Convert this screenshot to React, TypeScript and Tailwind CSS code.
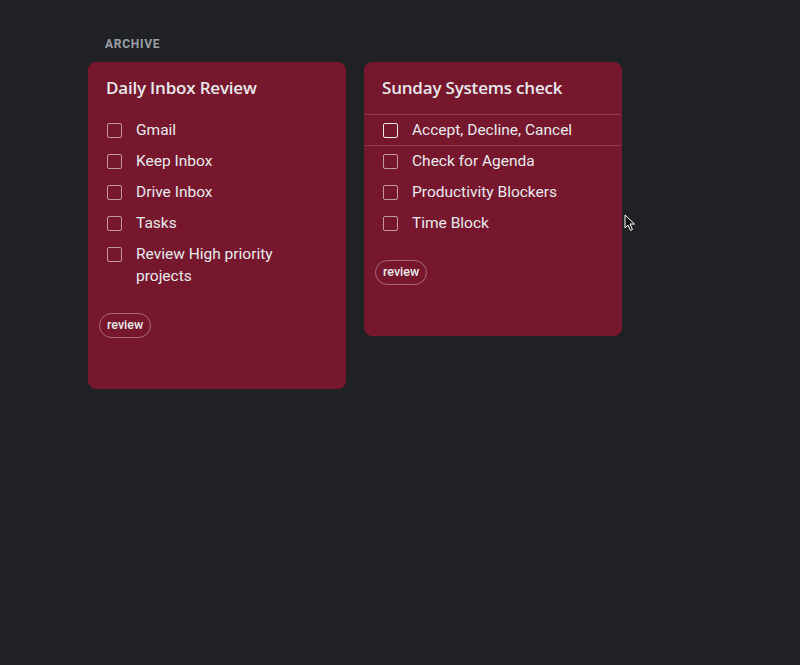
import { useState } from 'react'

type Note = { title: string; items: string[]; label: string; hovered?: number }

const NOTES: Note[] = [
  {
    title: 'Daily Inbox Review',
    items: ['Gmail', 'Keep Inbox', 'Drive Inbox', 'Tasks', 'Review High priority projects'],
    label: 'review',
  },
  {
    title: 'Sunday Systems check',
    items: ['Accept, Decline, Cancel', 'Check for Agenda', 'Productivity Blockers', 'Time Block'],
    label: 'review',
    hovered: 0,
  },
]

function NoteCard({ note }: { note: Note }) {
  const [hover, setHover] = useState<number | undefined>(note.hovered)
  return (
    <div className="w-[258px] rounded-lg bg-[#77172e] border border-[#77172e] pb-[50px]">
      <div className="px-[17px] pt-[13px] pb-[14px] text-[17px] leading-6 font-semibold text-[#e8eaed] font-['Open_Sans',sans-serif] tracking-[-0.2px]">
        {note.title}
      </div>
      <ul>
        {note.items.map((item, i) => {
          const active = hover === i
          return (
            <li
              key={item}
              onMouseEnter={() => setHover(i)}
              onMouseLeave={() => setHover(note.hovered)}
              className={`flex items-start py-1 pl-[18px] pr-4 border-y -mb-px ${
                active ? 'border-white/15' : 'border-transparent'
              }`}
            >
              <span
                className={`mt-[3.5px] w-[15px] h-[15px] shrink-0 rounded-[2px] border-[1.5px] ${
                  active ? 'border-white/90' : 'border-white/55'
                }`}
              />
              <span className="ml-[14px] text-[15.5px] leading-[22px] text-[#e8eaed] font-['Roboto',sans-serif] max-w-[170px]">
                {item}
              </span>
            </li>
          )
        })}
      </ul>
      <div className="mt-[20px] px-[10px]">
        <span className="inline-flex items-center h-[25px] px-[7px] rounded-full border border-white/35 text-[12.5px] font-medium text-[#e8eaed] font-['Roboto',sans-serif]">
          {note.label}
        </span>
      </div>
    </div>
  )
}

export default function App() {
  return (
    <div className="relative min-h-[665px] w-[800px] bg-[#202124] pt-[37px] pl-[88px]">
      <div className="ml-[17px] text-[12px] leading-[15px] font-bold tracking-[0.06em] text-[#9aa0a6] font-['Roboto',sans-serif]">
        ARCHIVE
      </div>
      <div className="mt-[10px] flex items-start gap-[18px]">
        {NOTES.map(n => (
          <NoteCard key={n.title} note={n} />
        ))}
      </div>
      {/* mouse pointer */}
      <svg className="absolute left-[624px] top-[214px]" width="12" height="18" viewBox="0 0 12 18">
        <path d="M1 1 L1 14 L4 11 L6.5 16.5 L8.5 15.5 L6 10 L10.5 10 Z" fill="#111" stroke="#fff" strokeWidth="1" strokeLinejoin="round" />
      </svg>
    </div>
  )
}
